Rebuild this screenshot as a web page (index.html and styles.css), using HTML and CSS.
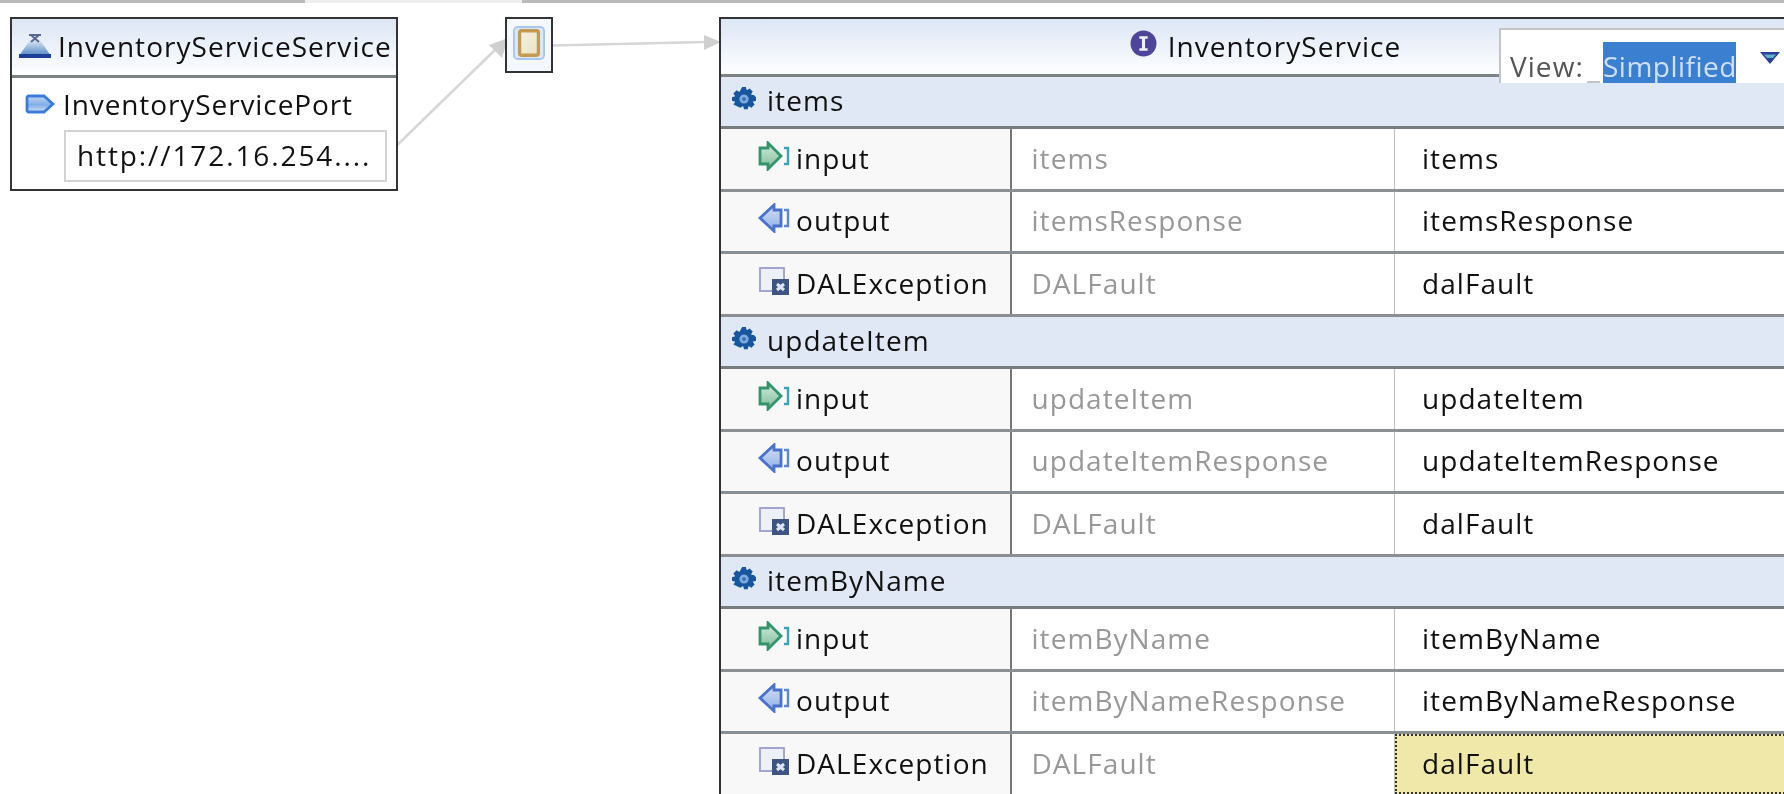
FILE: index.html
```html
<!DOCTYPE html>
<html lang="en">
<head>
<meta charset="utf-8">
<title>InventoryService</title>
<link rel="stylesheet" href="styles.css">
</head>
<body>
<svg class="defs" width="0" height="0" aria-hidden="true">
  <defs>
    <linearGradient id="gGreen" x1="0" y1="0" x2="0" y2="1"><stop offset="0" stop-color="#d3ebdd"/><stop offset="1" stop-color="#7cbc9a"/></linearGradient>
    <linearGradient id="gBlue" x1="0" y1="0" x2="0" y2="1"><stop offset="0" stop-color="#d5e1f7"/><stop offset="1" stop-color="#8dade3"/></linearGradient>
    <linearGradient id="gPort" x1="0" y1="0" x2="0" y2="1"><stop offset="0" stop-color="#c3d8f6"/><stop offset=".55" stop-color="#7fade8"/><stop offset="1" stop-color="#d5e4f9"/></linearGradient>
    <linearGradient id="gSvc" x1="0" y1="0" x2="0" y2="1"><stop offset="0" stop-color="#dfe8f6"/><stop offset="1" stop-color="#4f86c4"/></linearGradient>
    <linearGradient id="gPage" x1="0" y1="0" x2="1" y2="1"><stop offset="0" stop-color="#f6f2e2"/><stop offset="1" stop-color="#e9e2c6"/></linearGradient>
    <symbol id="i-gear" viewBox="0 0 26 26">
      <path fill="#17569c" d="M11 0h4l1 3.500 3-2 3.500 3.500-2 3L24 9v0l2 2v4l-3.500 1 2 3-3.500 3.500-3-2-1 3.500h-4l-1-3.500-3 2L1.500 19l2-3L0 15v-4l3.500-1-2-3L5 3.500l3 2z"/>
      <circle cx="13" cy="13" r="5" fill="#7ea9da"/>
      <circle cx="13" cy="13" r="2" fill="#2f6cb0"/>
    </symbol>
    <symbol id="i-input" viewBox="0 0 32 30">
      <path fill="url(#gGreen)" stroke="#35936a" stroke-width="2.800" d="M2 7h8V2l13 13-13 13v-5H2z"/>
      <path fill="none" stroke="#3fa0bc" stroke-width="2.400" d="M26 7h4v16h-4"/>
    </symbol>
    <symbol id="i-output" viewBox="0 0 32 30">
      <path fill="url(#gBlue)" stroke="#4a72cc" stroke-width="2.800" d="M23 7h-7V2L2 15l14 13v-5h7z"/>
      <path fill="none" stroke="#5f86cc" stroke-width="2.400" d="M26 7h4v16h-4"/>
    </symbol>
    <symbol id="i-fault" viewBox="0 0 32 30">
      <rect x="2" y="2" width="24" height="23" fill="#eef0f7" stroke="#a0a6cc" stroke-width="2"/>
      <rect x="14" y="13" width="17" height="16" fill="#3e5584"/>
      <path stroke="#dfe4f0" stroke-width="3" d="M19 18l7 6M26 18l-7 6"/>
    </symbol>
    <symbol id="i-service" viewBox="0 0 34 24">
      <path fill="url(#gSvc)" d="M12 6h10l11 16H1z"/>
      <path fill="#1d3f96" d="M1 20h32v4H1z"/>
      <path fill="none" stroke="#55688f" stroke-width="2" d="M11 1h12M13 8l8-7M21 8l-8-7"/>
    </symbol>
    <symbol id="i-port" viewBox="0 0 30 20">
      <path fill="url(#gPort)" stroke="#3a7ad8" stroke-width="2.800" d="M4 2h15l9 8-9 8H4q-2 0-2-2V4q0-2 2-2z"/>
    </symbol>
    <symbol id="i-binding" viewBox="0 0 34 36">
      <rect x="1" y="1" width="32" height="34" rx="4" fill="#dce8fa" stroke="#a9c6ee" stroke-width="2"/>
      <rect x="7" y="5" width="20" height="26" rx="2" fill="url(#gPage)" stroke="#c49a50" stroke-width="3.500"/>
    </symbol>
    <symbol id="i-interface" viewBox="0 0 26 26">
      <circle cx="13" cy="13" r="12.500" fill="#4f4598"/>
      <path fill="#f2f0fa" d="M9 6h8v2.500h-2.500v9H17V20H9v-2.500h2.500v-9H9z"/>
    </symbol>
  </defs>
</svg>

<main class="canvas">
  <div class="topbar"><span class="topbar-left"></span><span class="topbar-tab"></span><span class="topbar-right"></span></div>

  <svg class="wires" width="1784" height="794" aria-hidden="true">
    <path class="wire" d="M388 154 L498 47"/>
    <path class="arrow" d="M508 38 L502 58 L489 45z"/>
    <path class="wire" d="M552 45.500 L706 42"/>
    <path class="arrow" d="M721 42 L704 35 L704 50z"/>
  </svg>

  <section class="node service">
    <header class="service-title">
      <svg class="ic ic-service"><use href="#i-service"/></svg>
      <span>InventoryServiceService</span>
    </header>
    <div class="service-body">
      <div class="port"><svg class="ic ic-port"><use href="#i-port"/></svg><span>InventoryServicePort</span></div>
      <div class="address">http://172.16.254....</div>
    </div>
  </section>

  <section class="node binding"><svg class="ic ic-binding"><use href="#i-binding"/></svg></section>

  <section class="node iface">
    <header class="iface-title">
      <svg class="ic ic-interface"><use href="#i-interface"/></svg>
      <span>InventoryService</span>
    </header>

    <div class="op"><svg class="ic ic-gear"><use href="#i-gear"/></svg><span>items</span></div>
    <div class="row"><div class="c1"><svg class="ic ic-msg"><use href="#i-input"/></svg>input</div><div class="c2">items</div><div class="c3">items</div></div>
    <div class="row"><div class="c1"><svg class="ic ic-msg"><use href="#i-output"/></svg>output</div><div class="c2">itemsResponse</div><div class="c3">itemsResponse</div></div>
    <div class="row"><div class="c1"><svg class="ic ic-msg"><use href="#i-fault"/></svg>DALException</div><div class="c2">DALFault</div><div class="c3">dalFault</div></div>

    <div class="op"><svg class="ic ic-gear"><use href="#i-gear"/></svg><span>updateItem</span></div>
    <div class="row"><div class="c1"><svg class="ic ic-msg"><use href="#i-input"/></svg>input</div><div class="c2">updateItem</div><div class="c3">updateItem</div></div>
    <div class="row"><div class="c1"><svg class="ic ic-msg"><use href="#i-output"/></svg>output</div><div class="c2">updateItemResponse</div><div class="c3">updateItemResponse</div></div>
    <div class="row"><div class="c1"><svg class="ic ic-msg"><use href="#i-fault"/></svg>DALException</div><div class="c2">DALFault</div><div class="c3">dalFault</div></div>

    <div class="op"><svg class="ic ic-gear"><use href="#i-gear"/></svg><span>itemByName</span></div>
    <div class="row"><div class="c1"><svg class="ic ic-msg"><use href="#i-input"/></svg>input</div><div class="c2">itemByName</div><div class="c3">itemByName</div></div>
    <div class="row"><div class="c1"><svg class="ic ic-msg"><use href="#i-output"/></svg>output</div><div class="c2">itemByNameResponse</div><div class="c3">itemByNameResponse</div></div>
    <div class="row"><div class="c1"><svg class="ic ic-msg"><use href="#i-fault"/></svg>DALException</div><div class="c2">DALFault</div><div class="c3 selected">dalFault</div></div>
  </section>

  <div class="view">
    <span class="view-label">View:</span>
    <span class="view-gap"></span>
    <span class="view-value">Simplified</span>
    <svg class="view-caret" width="20" height="12" viewBox="0 0 20 12"><path fill="#2b3f9c" d="M0 0h20L10 12z"/><path fill="#5cb4c4" d="M4 2.500h12L13 6H7z"/></svg>
  </div>
</main>
</body>
</html>
```

FILE: styles.css
```css
* { box-sizing: border-box; }

html, body {
  margin: 0;
  width: 1784px;
  height: 794px;
  overflow: hidden;
  background: #fff;
}

.defs { position: absolute; }

.canvas {
  position: relative;
  width: 1784px;
  height: 794px;
  overflow: hidden;
  font-family: "Open Sans", "Noto Sans", sans-serif;
  font-size: 28px;
  letter-spacing: 1.05px;
  color: #111;
  filter: blur(0.7px);
}

.topbar {
  display: flex;
  height: 3px;
}
.topbar-left { width: 305px; background: #b9b9b9; }
.topbar-tab { width: 217px; background: #eeeeee; }
.topbar-right { flex: 1; background: #b9b9b9; }

.wires { position: absolute; left: 0; top: 0; }
.wire { fill: none; stroke: #d6d6d6; stroke-width: 2.500; }
.arrow { fill: #cfcfcf; }

.node {
  position: absolute;
  border: 2.500px solid #333;
  background: #fff;
}

.ic { display: block; flex: none; }

/* Service node */
.service { left: 10px; top: 17px; width: 388px; height: 174px; }
.service-title {
  display: flex;
  align-items: center;
  gap: 6px;
  height: 59px;
  padding: 0 0 2px 6px;
  border-bottom: 3px solid #7d8285;
  background: linear-gradient(#dde6f5, #fdfeff);
}
.ic-service { width: 34px; height: 24px; }
.service-body { padding: 3px 0 0 13px; }
.port { display: flex; align-items: center; gap: 8px; height: 46px; letter-spacing: .9px; }
.ic-port { width: 30px; height: 20px; }
.address {
  display: flex;
  align-items: center;
  width: 323px;
  height: 52px;
  margin: 3px 0 0 39px;
  padding: 0 0 3px 11px;
  border: 2px solid #d3d3d3;
  letter-spacing: 1.9px;
}

/* Binding node */
.binding {
  left: 505px;
  top: 17px;
  width: 48px;
  height: 56px;
  padding: 7px 0 0 6px;
  background: #f4f7fc;
}
.ic-binding { width: 32px; height: 34px; }

/* Interface node */
.iface { left: 719px; top: 17px; width: 1100px; height: 800px; }
.iface-title {
  display: flex;
  align-items: center;
  justify-content: center;
  gap: 11px;
  height: 57.500px;
  padding: 0 7px 0 0;
  border-bottom: 3px solid #7d8285;
  background: linear-gradient(#dde6f5, #fdfeff);
}
.ic-interface { width: 27px; height: 27px; margin-top: -6px; }

.op {
  display: flex;
  align-items: center;
  gap: 11px;
  height: 52.500px;
  padding: 0 0 3px 11px;
  background: #dfe8f4;
  border-bottom: 3px solid #767c80;
}
.ic-gear { width: 24px; height: 24px; margin-top: -2px; }

.row {
  display: grid;
  grid-template-columns: 291px 383px 1fr;
  height: 62.500px;
  border-bottom: 3px solid #8a8f92;
}
.c1, .c2, .c3 {
  display: flex;
  align-items: center;
  padding-bottom: 2px;
}
.c1 {
  gap: 6px;
  padding-left: 37px;
  background: #f8f8f8;
  border-right: 2px solid #777;
}
.c2 {
  padding-left: 19.500px;
  color: #989898;
  border-right: 1px solid #bdbdbd;
}
.c3 { padding-left: 27px; }
.selected {
  background: #efe8a8;
  outline: 2px dotted #333;
  outline-offset: -2px;
}
.ic-msg { width: 32px; height: 30px; margin-top: -4px; }

/* View selector overlay */
.view {
  position: absolute;
  left: 1499px;
  top: 28px;
  width: 285px;
  height: 55px;
  display: flex;
  align-items: flex-end;
  background: #fff;
  border-top: 2px solid #c4c4c4;
  border-left: 2px solid #c4c4c4;
}
.view-label {
  width: 86px;
  padding-left: 9px;
  color: #555;
  line-height: 34px;
}
.view-gap {
  width: 13px;
  height: 2px;
  background: #c4c4c4;
}
.view-value {
  width: 133px;
  height: 41px;
  margin-left: 3px;
  padding-top: 7px;
  line-height: 34px;
  letter-spacing: .5px;
  text-align: center;
  color: #cfe0f5;
  background: #3b7fd0;
}
.view-caret { position: absolute; right: 4px; top: 22px; }
```
